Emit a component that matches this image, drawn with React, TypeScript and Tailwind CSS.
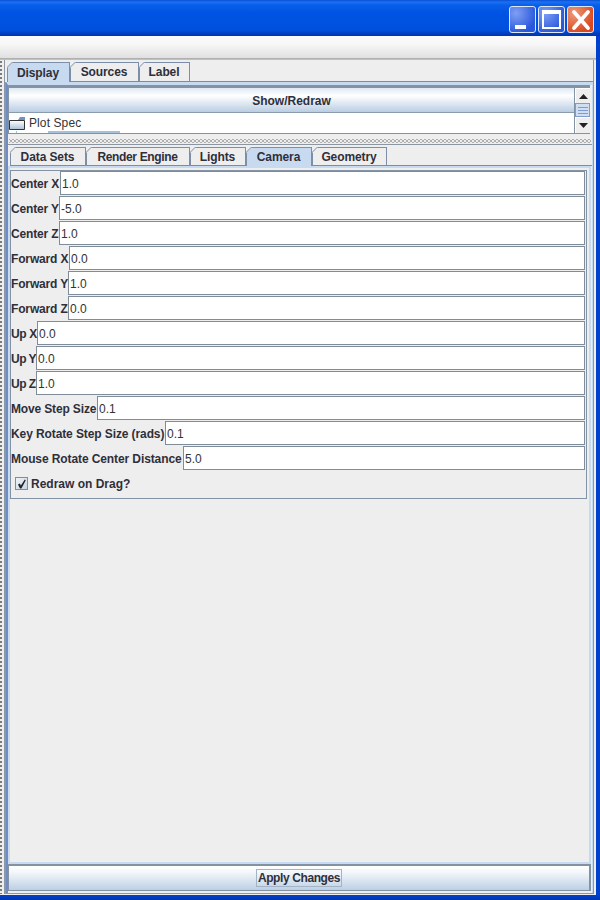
import type { ReactNode } from "react";

const rows = [
  { label: "Center X", value: "1.0", width: "w-[49px]" },
  { label: "Center Y", value: "-5.0", width: "w-[48px]" },
  { label: "Center Z", value: "1.0", width: "w-[48px]" },
  { label: "Forward X", value: "0.0", width: "w-[58px]" },
  { label: "Forward Y", value: "1.0", width: "w-[57px]" },
  { label: "Forward Z", value: "0.0", width: "w-[57px]" },
  { label: "Up X", value: "0.0", width: "w-[26px] tracking-[-0.4px]!" },
  { label: "Up Y", value: "0.0", width: "w-[25px] tracking-[-0.5px]!" },
  { label: "Up Z", value: "1.0", width: "w-[25px] tracking-[-0.5px]!" },
  { label: "Move Step Size", value: "0.1", width: "w-[86px]" },
  { label: "Key Rotate Step Size (rads)", value: "0.1", width: "w-[154px] tracking-[-0.1px]!" },
  { label: "Mouse Rotate Center Distance", value: "5.0", width: "w-[172px] tracking-[-0.1px]!" },
];

function Tab({ label, size, active, tight }: { label: string; size: string; active?: boolean; tight?: boolean }) {
  return (
    <div
      className={`relative flex items-center justify-center border-x border-t border-[#7d8ea8] pr-px text-xs font-bold text-[#2f2f3a] ${size} ${
        active ? "bg-[#c8daf0]" : "border-b border-b-[#6f8cc4] bg-[#eeeeee]"
      } ${tight ? "tracking-[-0.35px]" : "tracking-[-0.1px]"}`}
    >
      <svg className="absolute -left-px -top-px" width="6" height="6" viewBox="0 0 6 6">
        <path d="M0 0H6L0 6Z" fill="#eeeeee" />
        <path d="M0 5.5L5.5 0" stroke="#7d8ea8" strokeWidth="1" />
      </svg>
      {label}
    </div>
  );
}

function Row({ label, value, width }: { label: string; value: string; width: string }) {
  return (
    <div className="flex h-[25px] items-start">
      <span className={`h-[24px] shrink-0 whitespace-nowrap text-xs font-bold leading-[26px] tracking-[-0.15px] text-[#2f2f3a] ${width}`}>{label}</span>
      <div className="flex h-[24px] flex-1 items-center border border-[#7f8c9a] bg-white pl-px pt-px text-xs text-[#333]">
        {value}
      </div>
    </div>
  );
}

function WinButton({ children, close }: { children: ReactNode; close?: boolean }) {
  return (
    <div
      className={`flex h-[27px] w-[27px] items-center justify-center rounded-[3px] border border-[#dfe8fb] ${
        close
          ? "bg-[radial-gradient(circle_at_25%_25%,#ee9a78,#d9481e_75%)]"
          : "bg-[radial-gradient(circle_at_25%_25%,#7f9ff3,#2a58dd_75%)]"
      }`}
    >
      {children}
    </div>
  );
}

export default function App() {
  return (
    <div className="flex h-[900px] w-[600px] flex-col overflow-hidden bg-[#eeeeee] font-['Liberation_Sans',Arial,sans-serif]">
      {/* title bar */}
      <div className="flex h-[36px] shrink-0 items-start justify-end gap-[2px] bg-[linear-gradient(#0a4fd0_0px,#1a70f5_2px,#0a5fe8_5px,#0054e3_12px,#0050de_30px,#003cbc_34px,#0036b0_36px)] pr-[6px] pt-[6px]">
        <WinButton>
          <div className="mb-[3px] mr-[5px] h-[4px] w-[11px] self-end bg-white" />
        </WinButton>
        <WinButton>
          <div className="h-[19px] w-[19px] border-2 border-t-[4px] border-white" />
        </WinButton>
        <WinButton close>
          <svg width="22" height="22" viewBox="0 0 22 22">
            <path d="M4 3L18 19M18 3L4 19" stroke="white" strokeWidth="3.8" strokeLinecap="round" />
          </svg>
        </WinButton>
      </div>

      <div className="flex min-h-0 flex-1">
        <div className="flex min-w-0 flex-1 flex-col">
          {/* menu strip */}
          <div className="h-[22px] shrink-0 bg-[linear-gradient(#fbfbfb,#f6f6f6_40%,#e0e0e0)]" />
          <div className="h-[2px] shrink-0 bg-[linear-gradient(#a8a8a8,#c8c8c8)]" />

          <div className="mb-px flex min-h-0 flex-1">
            {/* toolbar grip */}
            <div className="w-[4px] shrink-0 bg-[radial-gradient(circle,#777_0.7px,transparent_0.9px)] bg-[length:4px_4px] bg-[position:-1px_0]" />
            <div className="mr-[2px] flex min-w-0 flex-1 flex-col border-b border-l border-r border-[#8b98a6]">
              {/* outer tabs */}
              <div className="flex h-[22px] shrink-0 items-start pl-[2px] pt-[2px]">
                <Tab label="Display" size="h-[20px] w-[63px]" active />
                <Tab label="Sources" size="h-[20px] w-[69px]" />
                <Tab label="Label" size="h-[20px] w-[51px]" />
                <div className="mt-[19px] h-px flex-1 bg-[#6f8cc4]" />
              </div>

              <div className="ml-px flex min-h-0 flex-1 flex-col border-l-2 border-r border-t-[3px] border-[#c8daf0] border-l-[#6f8cc4] shadow-[-1px_0_0_#8b98a6]">
                {/* top section */}
                <div className="mr-[2px] flex h-[49px] shrink-0 border-b border-l border-t-[3px] border-[#8293a5]">
                  <div className="flex min-w-0 flex-1 flex-col">
                    <div className="flex h-[25px] shrink-0 items-center justify-center border-b border-[#8a9bad] bg-[linear-gradient(#dfe8f2,#ffffff_32%,#b9cee3)] pt-[2px] text-xs font-bold text-[#2f2f3a]">
                      Show/Redraw
                    </div>
                    <div className="relative flex-1 bg-white">
                      <div className="flex h-[20px] items-center gap-[3px]">
                        <svg width="17" height="15" viewBox="0 0 17 15">
                          <defs>
                            <linearGradient id="folder" x1="0" y1="0" x2="0" y2="1">
                              <stop offset="0" stopColor="#ffffff" />
                              <stop offset="1" stopColor="#a9c0da" />
                            </linearGradient>
                          </defs>
                          <path d="M9 4L11 1H16V4Z" fill="#6f93bf" />
                          <path d="M0.5 4.5H15.5V13.5H0.5Z" fill="url(#folder)" stroke="#333" />
                        </svg>
                        <span className="text-xs tracking-[0.1px] text-[#333]">Plot Spec</span>
                      </div>
                      <div className="absolute bottom-0 left-[7px] h-[2px] w-px bg-[#a9c0da]" />
                      <div className="absolute bottom-0 left-[39px] h-[2px] w-[72px] bg-[#a9c0da]" />
                    </div>
                  </div>
                  {/* scrollbar */}
                  <div className="flex w-[16px] shrink-0 flex-col border-l border-[#8293a5] bg-[#eeeeee]">
                    <div className="flex h-[15px] items-center justify-center border-l border-t border-white">
                      <svg width="9" height="5" viewBox="0 0 9 5"><path d="M4.5 0L9 5H0Z" fill="#222" /></svg>
                    </div>
                    <div className="flex h-[14px] flex-col items-center justify-center gap-[2px] border border-[#7f9bd0] bg-[#d0dfef]">
                      <div className="h-px w-[10px] bg-[#7f9bd0]" />
                      <div className="h-px w-[10px] bg-[#7f9bd0]" />
                      <div className="h-px w-[10px] bg-[#7f9bd0]" />
                    </div>
                    <div className="flex flex-1 items-center justify-center border-l border-t border-white">
                      <svg width="9" height="5" viewBox="0 0 9 5"><path d="M0 0H9L4.5 5Z" fill="#222" /></svg>
                    </div>
                  </div>
                </div>

                {/* splitter */}
                <div className="flex h-[11px] shrink-0 flex-col border-b border-[#8a96a2] pt-[5px]">
                  <div className="mx-[1px] h-[4px] bg-[radial-gradient(circle,#8a8a8a_0.6px,transparent_0.9px),radial-gradient(circle,#8a8a8a_0.6px,transparent_0.9px)] bg-[length:4px_4px] bg-[position:0_0,2px_2px]" />
                </div>

                {/* inner tabs */}
                <div className="flex h-[21px] shrink-0 items-start pl-[2px] pt-[2px]">
                  <Tab label="Data Sets" size="h-[19px] w-[76px]" />
                  <Tab label="Render Engine" size="h-[19px] w-[104px]" tight />
                  <Tab label="Lights" size="h-[19px] w-[56px]" />
                  <Tab label="Camera" size="h-[19px] w-[66px]" active />
                  <Tab label="Geometry" size="h-[19px] w-[75px]" />
                  <div className="mt-[18px] h-px flex-1 bg-[#6f8cc4]" />
                </div>

                <div className="mr-px flex min-h-0 flex-1 flex-col border-x-2 border-y-2 border-[#c8daf0] pt-[2px]">
                  <div className="mr-[2px] flex h-[329px] shrink-0 flex-col border border-[#8293a5] pr-px">
                    {rows.map((r) => (
                      <Row key={r.label} label={r.label} value={r.value} width={r.width} />
                    ))}
                    <div className="flex h-[27px] items-start gap-[3px] pl-[4px] pt-[6px] text-xs font-bold leading-[15px] text-[#2f2f3a]">
                      <div className="flex h-[13px] w-[13px] items-center justify-center border border-[#7f8e9e] bg-[linear-gradient(135deg,#eef3f9,#c5d5e6)]">
                        <svg width="9" height="10" viewBox="0 0 9 10">
                          <path d="M1 5.5L2.8 4.6L3.9 6.4L7.8 0.6L8.8 1.2L4.4 9.6H3Z" fill="#222" />
                        </svg>
                      </div>
                      Redraw on Drag?
                    </div>
                  </div>
                </div>

                {/* bottom button */}
                <div className="mr-px flex h-[27px] shrink-0 items-center justify-center border-b border-l border-r-2 border-t-2 border-[#8292a3] bg-[linear-gradient(#ffffff,#f4f7fb_25%,#bcd0e5)] pb-px text-xs font-bold text-[#2f2f3a]">
                  <span className="border border-[#a4b4c6] px-px leading-[16px] tracking-[-0.4px]">Apply Changes</span>
                </div>
                <div className="h-[2px] shrink-0" />
              </div>
            </div>
          </div>
        </div>
        <div className="w-[4px] shrink-0 bg-[#0041cc]" />
      </div>
      <div className="h-[5px] shrink-0 bg-[linear-gradient(#0041cc,#0036b0)]" />
    </div>
  );
}
